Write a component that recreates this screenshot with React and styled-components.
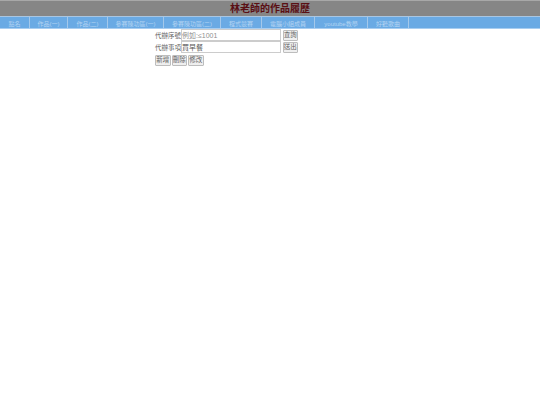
import styled, { createGlobalStyle } from 'styled-components';

const tabs = [
  { label: '點名', width: 30 },
  { label: '作品(一)', width: 38 },
  { label: '作品(二)', width: 40 },
  { label: '參賽陳功區(一)', width: 56 },
  { label: '參賽陳功區(二)', width: 57 },
  { label: '程式競賽', width: 41 },
  { label: '電腦小組成員', width: 53 },
  { label: 'youtube教學', width: 53 },
  { label: '好聽歌曲', width: 41 },
];

const App = () => {
  return (
    <>
      <GlobalStyle />
      <Header>林老師的作品履歷</Header>
      <Nav>
        {tabs.map((tab) => (
          <Tab key={tab.label} $width={tab.width}>
            {tab.label}
          </Tab>
        ))}
      </Nav>
      <Form>
        <Row>
          <Label>代辦序號</Label>
          <TextInput placeholder='例如:≤1001' />
          <Button>查詢</Button>
        </Row>
        <Row>
          <Label>代辦事項</Label>
          <TextInput defaultValue='買早餐' />
          <Button>送出</Button>
        </Row>
        <ButtonRow>
          <Button>新增</Button>
          <Button>刪除</Button>
          <Button>修改</Button>
        </ButtonRow>
      </Form>
    </>
  );
};

const GlobalStyle = createGlobalStyle`
  html, body {
    margin: 0;
    background: #ffffff;
    font-family: 'Liberation Sans', 'Noto Sans CJK TC', sans-serif;
  }
`;

const Header = styled.h1`
  box-sizing: border-box;
  margin: 0;
  height: 16px;
  border-top: 1px solid #a8a8a8;
  background: #868686;
  color: #5a0f14;
  font-size: 10px;
  font-weight: 700;
  line-height: 15px;
  text-align: center;
`;

const Nav = styled.nav`
  box-sizing: border-box;
  display: flex;
  height: 13px;
  border-top: 1px solid #a9c6e2;
  border-bottom: 1px solid #a8cdf0;
  background: #6aaae4;
`;

const Tab = styled.a`
  box-sizing: border-box;
  width: ${(props) => props.$width}px;
  border-right: 1px solid #a4c8ea;
  color: #b4d4f2;
  font-size: 6px;
  line-height: 14px;
  text-align: center;
  white-space: nowrap;
`;

const Form = styled.div`
  display: flex;
  flex-direction: column;
  gap: 0.5px;
  margin-left: 155px;
  padding-top: 0.5px;
`;

const Row = styled.div`
  display: flex;
  align-items: center;
  height: 11.5px;
`;

const Label = styled.span`
  width: 26px;
  color: #666666;
  font-size: 6.5px;
  white-space: nowrap;
`;

const TextInput = styled.input`
  box-sizing: border-box;
  width: 100px;
  height: 12px;
  padding: 0;
  border: 1px solid #cccccc;
  color: #555555;
  font-family: inherit;
  font-size: 7px;
  outline: none;

  &::placeholder {
    color: #8f8f8f;
  }
`;

const Button = styled.button`
  box-sizing: border-box;
  flex: none;
  width: 15.5px;
  height: 11.5px;
  margin-left: 1.5px;
  padding: 0;
  overflow: hidden;
  border: 1px solid #bdbdbd;
  border-radius: 1px;
  background: #efefef;
  color: #666666;
  font-family: inherit;
  font-size: 6.5px;
  line-height: 1;
  white-space: nowrap;
`;

const ButtonRow = styled(Row)`
  gap: 1px;
  margin-top: 1px;

  ${Button} {
    margin-left: 0;
  }
`;

export default App;
